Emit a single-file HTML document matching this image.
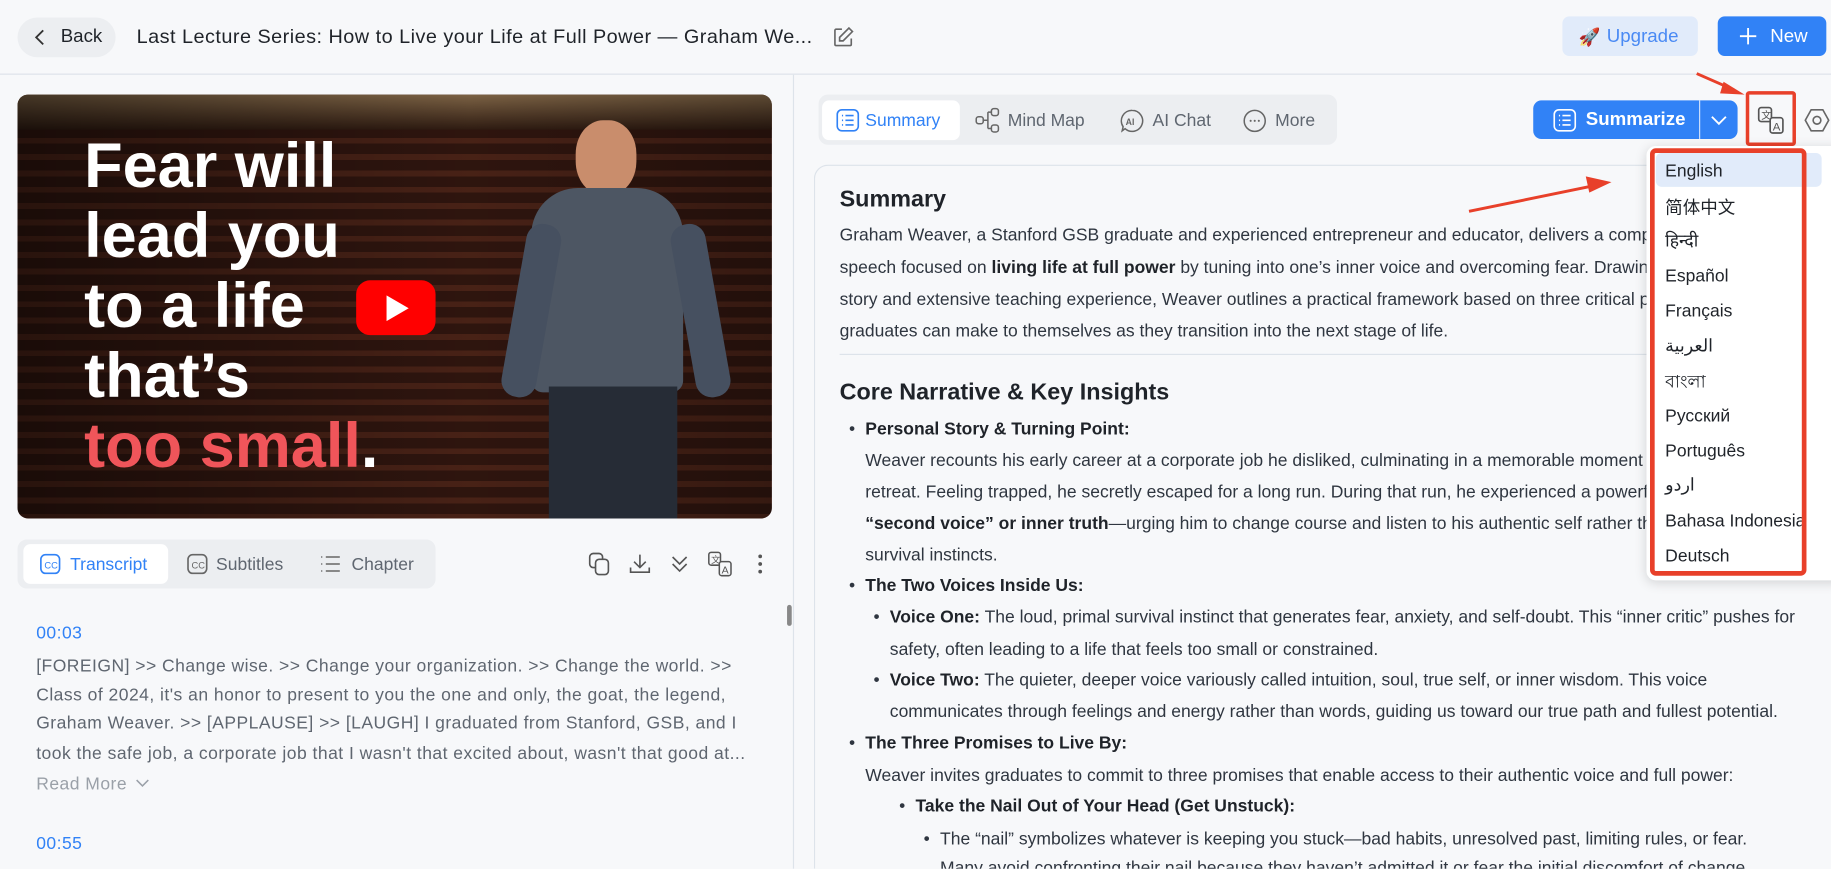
<!DOCTYPE html>
<html><head><meta charset="utf-8"><style>
*{box-sizing:border-box;margin:0;padding:0}
html,body{width:1831px;height:869px;overflow:hidden;background:#f7f8fa}
#w{width:1568px;height:744px;position:relative;transform:scale(1.16773);transform-origin:0 0;font-family:"Liberation Sans","Noto Sans CJK SC",sans-serif;color:#1f2329;overflow:hidden}
.a{position:absolute;white-space:nowrap}
.ln{position:absolute;white-space:nowrap;font-size:15px;color:#2f3640}
.tr{position:absolute;white-space:nowrap;font-size:15px;color:#5f6670;left:31px;letter-spacing:.4px}
b{font-weight:bold;color:#1f2329}
.dd{position:absolute;left:1426px;font-size:15px;color:#1f2329;white-space:nowrap}
svg{position:absolute}
</style></head><body><div id="w">
<!-- header -->
<div class="a" style="left:0;top:0;width:1568px;height:64px;border-bottom:1px solid #dde3ea"></div>
<div class="a" style="left:15px;top:15px;width:84px;height:34px;border-radius:17px;background:#eceef1"></div>
<svg style="left:28px;top:24px" width="14" height="16" viewBox="0 0 14 16"><path d="M9 2L3 8l6 6" fill="none" stroke="#333" stroke-width="1.6"/></svg>
<div class="a" style="left:52px;top:23px;font-size:16px;color:#1f2329">Back</div>
<div class="a" style="left:117px;top:22px;font-size:17px;color:#1f2329;letter-spacing:.4px">Last Lecture Series: How to Live your Life at Full Power — Graham We...</div>
<svg style="left:712px;top:22px" width="20" height="20" viewBox="0 0 20 20"><path d="M9 3H4a1 1 0 0 0-1 1v12a1 1 0 0 0 1 1h12a1 1 0 0 0 1-1v-5M15 2l3 3-8 8H7v-3z" fill="none" stroke="#666" stroke-width="1.4"/></svg>
<div class="a" style="left:1338px;top:14px;width:116px;height:34px;border-radius:6px;background:#e1ebfa"></div>
<div class="a" style="left:1352px;top:23px;font-size:15px">🚀</div>
<div class="a" style="left:1376px;top:23px;font-size:16px;color:#4a8af4">Upgrade</div>
<div class="a" style="left:1471px;top:14px;width:93px;height:34px;border-radius:6px;background:#3182f6"></div>
<svg style="left:1489px;top:23px" width="16" height="16" viewBox="0 0 16 16"><path d="M8 1v14M1 8h14" stroke="#fff" stroke-width="1.6"/></svg>
<div class="a" style="left:1516px;top:23px;font-size:16px;color:#fff">New</div>
<div class="a" style="left:679px;top:64px;width:1px;height:680px;background:#dde3ea"></div>

<!-- video -->
<div class="a" style="left:15px;top:81px;width:646px;height:363px;border-radius:9px;overflow:hidden;background:repeating-linear-gradient(180deg,#3a1a12 0 9px,#5a2a1c 9px 14px)">
 <div class="a" style="left:0;top:0;width:646px;height:30px;background:linear-gradient(#9a7a55,#3a2216)"></div>
 <div class="a" style="left:0;top:0;width:646px;height:363px;background:linear-gradient(90deg,rgba(0,0,0,.55),rgba(0,0,0,.2) 60%,rgba(0,0,0,.4))"></div>
 <div class="a" style="left:478px;top:22px;width:52px;height:64px;border-radius:45%;background:#c98d6c"></div>
 <div class="a" style="left:440px;top:80px;width:130px;height:175px;border-radius:40px 40px 10px 10px;background:#4d5663"></div>
 <div class="a" style="left:425px;top:110px;width:30px;height:150px;border-radius:14px;background:#465060;transform:rotate(10deg)"></div>
 <div class="a" style="left:570px;top:110px;width:30px;height:150px;border-radius:14px;background:#465060;transform:rotate(-10deg)"></div>
 <div class="a" style="left:455px;top:250px;width:110px;height:113px;background:#262c36"></div>
 <div class="a" style="left:57px;top:31px;font-size:54px;font-weight:bold;color:#fff;line-height:60px;white-space:normal;width:300px">Fear will<br>lead you<br>to a life<br>that’s<br><span style="color:#f0555a">too small</span>.</div>
 <div class="a" style="left:290px;top:159px;width:68px;height:47px;border-radius:12px;background:#f00"></div>
 <svg style="left:316px;top:172px" width="20" height="22" viewBox="0 0 20 22"><path d="M0 0L19 11 0 22z" fill="#fff"/></svg>
</div>

<!-- transcript tabs -->
<div class="a" style="left:15px;top:462px;width:358px;height:42px;border-radius:8px;background:#eceef1"></div>
<div class="a" style="left:20px;top:466px;width:124px;height:34px;border-radius:6px;background:#fff"></div>
<svg style="left:34px;top:474px" width="18" height="18" viewBox="0 0 18 18"><rect x="1" y="1" width="16" height="16" rx="4" fill="none" stroke="#3182f6" stroke-width="1.4"/><text x="4" y="13" font-size="8" fill="#3182f6" font-family="Liberation Sans">CC</text></svg>
<div class="a" style="left:60px;top:475px;font-size:15px;color:#3182f6">Transcript</div>
<svg style="left:160px;top:474px" width="18" height="18" viewBox="0 0 18 18"><rect x="1" y="1" width="16" height="16" rx="4" fill="none" stroke="#666" stroke-width="1.4"/><text x="4" y="13" font-size="8" fill="#666" font-family="Liberation Sans">CC</text></svg>
<div class="a" style="left:185px;top:475px;font-size:15px;color:#5f6670">Subtitles</div>
<svg style="left:274px;top:475px" width="18" height="16" viewBox="0 0 18 16"><path d="M1 2h1M5 2h12M1 8h1M5 8h12M1 14h1M5 14h12" stroke="#666" stroke-width="1.3"/></svg>
<div class="a" style="left:301px;top:475px;font-size:15px;color:#5f6670">Chapter</div>
<svg style="left:504px;top:473px" width="20" height="20" viewBox="0 0 20 20"><rect x="1" y="1" width="11" height="12" rx="3" fill="none" stroke="#555" stroke-width="1.4"/><rect x="6" y="6" width="11" height="13" rx="3" fill="#f7f8fa" stroke="#555" stroke-width="1.4"/></svg>
<svg style="left:538px;top:473px" width="20" height="20" viewBox="0 0 20 20"><path d="M10 2v11M5 8l5 5 5-5M2 13v4h16v-4" fill="none" stroke="#555" stroke-width="1.4"/></svg>
<svg style="left:573px;top:474px" width="18" height="18" viewBox="0 0 18 18"><path d="M3 3l6 6 6-6M3 9l6 6 6-6" fill="none" stroke="#555" stroke-width="1.4"/></svg>
<svg style="left:606px;top:472px" width="22" height="22" viewBox="0 0 22 22"><rect x="1" y="1" width="10" height="11" rx="2" fill="none" stroke="#555" stroke-width="1.3"/><rect x="10" y="9" width="10" height="12" rx="2" fill="#f7f8fa" stroke="#555" stroke-width="1.3"/><text x="3" y="10" font-size="8" fill="#555">文</text><text x="12" y="19" font-size="9" fill="#555" font-family="Liberation Sans">A</text></svg>
<svg style="left:648px;top:474px" width="6" height="18" viewBox="0 0 6 18"><circle cx="3" cy="2.5" r="1.6" fill="#555"/><circle cx="3" cy="9" r="1.6" fill="#555"/><circle cx="3" cy="15.5" r="1.6" fill="#555"/></svg>
<div class="a" style="left:674px;top:518px;width:4px;height:18px;border-radius:2px;background:#888"></div>

<div class="tr" style="top:534px;color:#3182f6">00:03</div>
<div class="tr" style="top:562px">[FOREIGN] &gt;&gt; Change wise. &gt;&gt; Change your organization. &gt;&gt; Change the world. &gt;&gt;</div>
<div class="tr" style="top:587px">Class of 2024, it's an honor to present to you the one and only, the goat, the legend,</div>
<div class="tr" style="top:611px">Graham Weaver. &gt;&gt; [APPLAUSE] &gt;&gt; [LAUGH] I graduated from Stanford, GSB, and I</div>
<div class="tr" style="top:637px">took the safe job, a corporate job that I wasn't that excited about, wasn't that good at...</div>
<div class="tr" style="top:663px;color:#9aa0a8">Read More</div>
<svg style="left:115px;top:666px" width="14" height="10" viewBox="0 0 14 10"><path d="M2 2l5 5 5-5" fill="none" stroke="#9aa0a8" stroke-width="1.3"/></svg>
<div class="tr" style="top:714px;color:#3182f6">00:55</div>

<!-- right tabs -->
<div class="a" style="left:701px;top:81px;width:444px;height:43px;border-radius:8px;background:#eceef1"></div>
<div class="a" style="left:704px;top:86px;width:118px;height:34px;border-radius:6px;background:#fff"></div>
<svg style="left:716px;top:93px" width="20" height="20" viewBox="0 0 20 20"><rect x="1" y="1" width="18" height="18" rx="4" fill="none" stroke="#3182f6" stroke-width="1.4"/><path d="M5 6h1M8 6h7M5 10h1M8 10h7M5 14h1M8 14h7" stroke="#3182f6" stroke-width="1.4"/></svg>
<div class="a" style="left:741px;top:95px;font-size:15px;color:#3182f6">Summary</div>
<svg style="left:835px;top:92px" width="22" height="22" viewBox="0 0 22 22"><rect x="1" y="8" width="6" height="6" rx="2" fill="none" stroke="#666" stroke-width="1.3"/><rect x="14" y="1" width="6" height="6" rx="2" fill="none" stroke="#666" stroke-width="1.3"/><rect x="14" y="15" width="6" height="6" rx="2" fill="none" stroke="#666" stroke-width="1.3"/><path d="M7 11h4M11 4v14M11 4h3M11 18h3" fill="none" stroke="#666" stroke-width="1.3"/></svg>
<div class="a" style="left:863px;top:95px;font-size:15px;color:#5f6670">Mind Map</div>
<svg style="left:959px;top:93px" width="21" height="21" viewBox="0 0 21 21"><path d="M10.5 1.5a9 9 0 1 1-6 15.7L2 19l.8-3.5A9 9 0 0 1 10.5 1.5z" fill="none" stroke="#666" stroke-width="1.3"/><text x="5" y="14" font-size="7.5" font-weight="bold" fill="#666" font-family="Liberation Sans">AI</text></svg>
<div class="a" style="left:987px;top:95px;font-size:15px;color:#5f6670">AI Chat</div>
<svg style="left:1064px;top:93px" width="21" height="21" viewBox="0 0 21 21"><circle cx="10.5" cy="10.5" r="9" fill="none" stroke="#666" stroke-width="1.3"/><circle cx="7" cy="10.5" r=".9" fill="#666"/><circle cx="10.5" cy="10.5" r=".9" fill="#666"/><circle cx="14" cy="10.5" r=".9" fill="#666"/></svg>
<div class="a" style="left:1092px;top:95px;font-size:15px;color:#5f6670">More</div>

<div class="a" style="left:1313px;top:86px;width:175px;height:33px;border-radius:7px;background:#3182f6"></div>
<div class="a" style="left:1455px;top:86px;width:1px;height:33px;background:#cfe0fc"></div>
<svg style="left:1330px;top:93px" width="20" height="20" viewBox="0 0 20 20"><rect x="1" y="1" width="18" height="18" rx="4" fill="none" stroke="#fff" stroke-width="1.4"/><path d="M5 6h1M8 6h7M5 10h1M8 10h7M5 14h1M8 14h7" stroke="#fff" stroke-width="1.4"/></svg>
<div class="a" style="left:1358px;top:94px;font-size:16px;font-weight:bold;color:#fff">Summarize</div>
<svg style="left:1464px;top:97px" width="16" height="12" viewBox="0 0 16 12"><path d="M2 3l6 6 6-6" fill="none" stroke="#fff" stroke-width="1.6"/></svg>
<svg style="left:1505px;top:91px" width="24" height="24" viewBox="0 0 22 22"><rect x="1" y="1" width="10" height="11" rx="2" fill="none" stroke="#555" stroke-width="1.3"/><rect x="10" y="9" width="10" height="12" rx="2" fill="#f7f8fa" stroke="#555" stroke-width="1.3"/><text x="3" y="10" font-size="8" fill="#555">文</text><text x="12" y="19" font-size="9" fill="#555" font-family="Liberation Sans">A</text></svg>
<div class="a" style="left:1495px;top:78px;width:43px;height:47px;border:3.5px solid #e8402a;border-radius:3px"></div>
<svg style="left:1545px;top:93px" width="22" height="20" viewBox="0 0 22 20"><path d="M6 1h10l5 9-5 9H6L1 10z" fill="none" stroke="#666" stroke-width="1.4"/><circle cx="11" cy="10" r="3.3" fill="none" stroke="#666" stroke-width="1.4"/></svg>

<!-- card -->
<div class="a" style="left:697px;top:141px;width:900px;height:603px;border:1px solid #dde3ea;border-bottom:none;border-radius:12px 12px 0 0"></div>
<div class="a" style="left:719px;top:160px;font-size:20px;font-weight:bold;color:#1f2329">Summary</div>
<div class="ln" style="left:719px;top:193px">Graham Weaver, a Stanford GSB graduate and experienced entrepreneur and educator, delivers a compelling</div>
<div class="ln" style="left:719px;top:221px">speech focused on <b>living life at full power</b> by tuning into one’s inner voice and overcoming fear. Drawing on his</div>
<div class="ln" style="left:719px;top:248px">story and extensive teaching experience, Weaver outlines a practical framework based on three critical promises</div>
<div class="ln" style="left:719px;top:275px">graduates can make to themselves as they transition into the next stage of life.</div>
<div class="a" style="left:719px;top:303px;width:860px;height:1px;background:#dde3ea"></div>
<div class="a" style="left:719px;top:325px;font-size:20px;font-weight:bold;color:#1f2329">Core Narrative &amp; Key Insights</div>
<div class="ln" style="left:727px;top:359px">•</div><div class="ln" style="left:741px;top:359px"><b>Personal Story &amp; Turning Point:</b></div>
<div class="ln" style="left:741px;top:386px">Weaver recounts his early career at a corporate job he disliked, culminating in a memorable moment at a company</div>
<div class="ln" style="left:741px;top:413px">retreat. Feeling trapped, he secretly escaped for a long run. During that run, he experienced a powerful sense of a</div>
<div class="ln" style="left:741px;top:440px"><b>“second voice” or inner truth</b>—urging him to change course and listen to his authentic self rather than his</div>
<div class="ln" style="left:741px;top:467px">survival instincts.</div>
<div class="ln" style="left:727px;top:493px">•</div><div class="ln" style="left:741px;top:493px"><b>The Two Voices Inside Us:</b></div>
<div class="ln" style="left:748px;top:520px">•</div><div class="ln" style="left:762px;top:520px"><b>Voice One:</b> The loud, primal survival instinct that generates fear, anxiety, and self-doubt. This “inner critic” pushes for</div>
<div class="ln" style="left:762px;top:548px">safety, often leading to a life that feels too small or constrained.</div>
<div class="ln" style="left:748px;top:574px">•</div><div class="ln" style="left:762px;top:574px"><b>Voice Two:</b> The quieter, deeper voice variously called intuition, soul, true self, or inner wisdom. This voice</div>
<div class="ln" style="left:762px;top:601px">communicates through feelings and energy rather than words, guiding us toward our true path and fullest potential.</div>
<div class="ln" style="left:727px;top:628px">•</div><div class="ln" style="left:741px;top:628px"><b>The Three Promises to Live By:</b></div>
<div class="ln" style="left:741px;top:656px">Weaver invites graduates to commit to three promises that enable access to their authentic voice and full power:</div>
<div class="ln" style="left:770px;top:682px">•</div><div class="ln" style="left:784px;top:682px"><b>Take the Nail Out of Your Head (Get Unstuck):</b></div>
<div class="ln" style="left:791px;top:710px">•</div><div class="ln" style="left:805px;top:710px">The “nail” symbolizes whatever is keeping you stuck—bad habits, unresolved past, limiting rules, or fear.</div>
<div class="ln" style="left:805px;top:735px">Many avoid confronting their nail because they haven’t admitted it or fear the initial discomfort of change.</div>

<!-- dropdown -->
<div class="a" style="left:1410px;top:125px;width:170px;height:372px;background:#fff;border-radius:8px;box-shadow:0 2px 10px rgba(0,0,0,.15)"></div>
<div class="a" style="left:1418px;top:131px;width:142px;height:29px;background:#e1ebfa;border-radius:5px"></div>
<div class="dd" style="top:138px">English</div>
<div class="dd" style="top:167px">简体中文</div>
<div class="dd" style="top:196px">हिन्दी</div>
<div class="dd" style="top:228px">Español</div>
<div class="dd" style="top:258px">Français</div>
<div class="dd" style="top:287px">العربية</div>
<div class="dd" style="top:316px">বাংলা</div>
<div class="dd" style="top:348px">Русский</div>
<div class="dd" style="top:378px">Português</div>
<div class="dd" style="top:406px">اردو</div>
<div class="dd" style="top:438px">Bahasa Indonesia</div>
<div class="dd" style="top:468px">Deutsch</div>
<div class="a" style="left:1413px;top:127px;width:134px;height:366px;border:4px solid #e8402a;border-radius:5px"></div>

<!-- arrows -->
<svg style="left:1240px;top:55px" width="260" height="135" viewBox="0 0 260 135"><path d="M213 8L245 22" stroke="#e8402a" stroke-width="2.5"/><path d="M254 26L236 15 233 25z" fill="#e8402a"/><path d="M18 126L125 104" stroke="#e8402a" stroke-width="2.5"/><path d="M140 101L118 96 121 110z" fill="#e8402a"/></svg>
</div></body></html>
